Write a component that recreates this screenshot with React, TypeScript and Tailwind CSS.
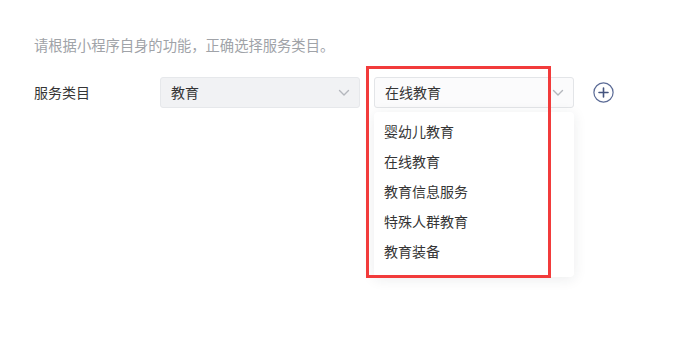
const options = ["婴幼儿教育", "在线教育", "教育信息服务", "特殊人群教育", "教育装备"];

function Chevron() {
  return (
    <svg width="12" height="8" viewBox="0 0 12 8" fill="none">
      <path d="M1.5 1.5L6 6l4.5-4.5" stroke="#b4b7bd" strokeWidth="1.4" strokeLinecap="round" strokeLinejoin="round" />
    </svg>
  );
}

export default function App() {
  return (
    <div
      className="relative h-[339px] w-[683px] bg-white text-[14px]"
      style={{ fontFamily: '"Noto Sans CJK SC", "Liberation Sans", sans-serif' }}
    >
      <div className="pl-[34px] pt-[35px]">
        <p className="h-[20px] leading-[20px] text-[14.3px] text-[#a0a3a8]">请根据小程序自身的功能，正确选择服务类目。</p>
        <div className="mt-[22px] flex items-center">
          <span className="w-[126px] text-[#353535]">服务类目</span>
          <div className="flex h-[31px] w-[200px] items-center justify-between rounded-[3px] border border-[#e6e8eb] bg-[#f1f2f4] pl-[10px] pr-[9px] text-[#353535]">
            <span>教育</span>
            <Chevron />
          </div>
          <div className="relative ml-[14px]">
            <div className="flex h-[31px] w-[200px] items-center justify-between rounded-[3px] border border-[#e3e5e8] bg-[#fbfbfc] pl-[10px] pr-[9px] text-[#353535]">
              <span>在线教育</span>
              <Chevron />
            </div>
            <ul className="absolute left-0 top-[35px] w-[200px] rounded-[4px] bg-white pb-[11px] pt-[4px] shadow-[0_2px_14px_rgba(30,40,60,0.09)]">
              {options.map((o) => (
                <li key={o} className="h-[30px] pl-[10px] leading-[30px] text-[#353535]">
                  {o}
                </li>
              ))}
            </ul>
          </div>
          <svg className="ml-[19px]" width="21" height="21" viewBox="0 0 21 21" fill="none">
            <circle cx="10.5" cy="10.5" r="9.6" stroke="#5b6b96" strokeWidth="1.2" />
            <path d="M10.5 6v9M6 10.5h9" stroke="#45557f" strokeWidth="1.6" strokeLinecap="round" />
          </svg>
        </div>
      </div>
      <div className="pointer-events-none absolute left-[366px] top-[66px] h-[212px] w-[185px] border-[3px] border-[#f23b3b]" />
    </div>
  );
}
